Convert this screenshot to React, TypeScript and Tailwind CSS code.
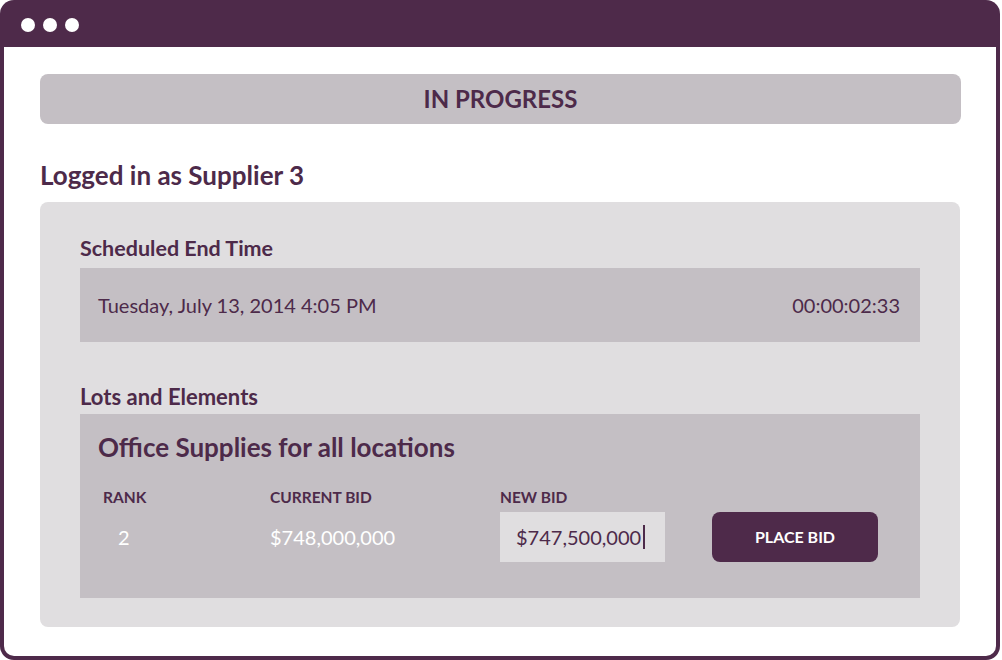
import React from "react";

export default function App() {
  return (
    <div className="w-[1002px] h-[660px] bg-white" style={{ fontFamily: "Lato, 'Open Sans', sans-serif" }}>
      <div className="w-[1000px] h-[660px] bg-[#4e2a4a] rounded-[14px] px-[4px] pb-[4px] flex flex-col">
        <div className="h-[47px] shrink-0 flex items-center gap-[8px] pl-[17px] pt-[3px]">
          <span className="w-[14px] h-[14px] rounded-full bg-white" />
          <span className="w-[14px] h-[14px] rounded-full bg-white" />
          <span className="w-[14px] h-[14px] rounded-full bg-white" />
        </div>
        <div className="flex-1 bg-white rounded-b-[10px] pl-[36px] pr-[35px] pt-[27px] text-[#4d2a4a]">
          <div className="h-[50px] rounded-[8px] bg-[#c4bfc4] flex items-center justify-center text-[24px] font-bold">
            IN PROGRESS
          </div>
          <div className="mt-[36px] h-[30px] leading-[30px] text-[26px] font-bold">
            Logged in as Supplier 3
          </div>
          <div className="mt-[12px] w-[920px] h-[425px] rounded-[8px] bg-[#e0dee0] px-[40px] pt-[34px]">
            <div className="h-[24px] leading-[24px] text-[21.5px] font-bold">Scheduled End Time</div>
            <div className="mt-[8px] h-[74px] bg-[#c4bfc4] flex items-center justify-between pl-[18px] pr-[20px] text-[20px]">
              <span>Tuesday, July 13, 2014 4:05 PM</span>
              <span>00:00:02:33</span>
            </div>
            <div className="mt-[43px] h-[24px] leading-[24px] text-[22px] font-bold">Lots and Elements</div>
            <div className="mt-[5px] h-[184px] bg-[#c4bfc4] px-[18px] pt-[17px]">
              <div className="h-[32px] leading-[32px] text-[26px] font-bold">Office Supplies for all locations</div>
              <div className="mt-[24px] flex h-[20px] leading-[20px] text-[15.5px] font-bold">
                <div className="w-[172px] pl-[5px]">RANK</div>
                <div className="w-[230px]">CURRENT BID</div>
                <div>NEW BID</div>
              </div>
              <div className="mt-[5px] flex h-[50px] items-center text-[20px]">
                <div className="w-[172px] pl-[20px] text-white">2</div>
                <div className="w-[230px] text-white">$748,000,000</div>
                <div className="w-[165px] h-[50px] bg-[#e0dee0] flex items-center pl-[16px]">
                  <span>$747,500,000</span>
                  <span className="ml-[2px] w-[1.5px] h-[24px] bg-[#4d2a4a]" />
                </div>
                <button className="ml-[47px] w-[166px] h-[50px] rounded-[8px] bg-[#4e2a4a] text-white text-[16px] font-bold">
                  PLACE BID
                </button>
              </div>
            </div>
          </div>
        </div>
      </div>
    </div>
  );
}
